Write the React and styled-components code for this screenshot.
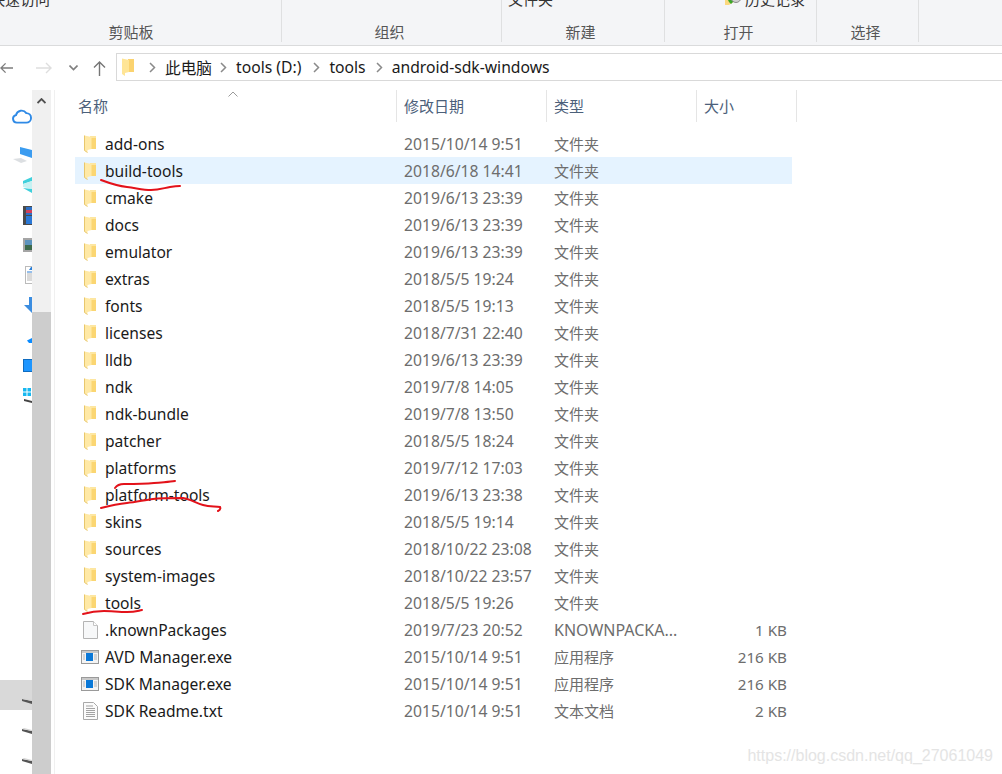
import styled, { createGlobalStyle } from "styled-components";

const GlobalStyle = createGlobalStyle`
  html, body {
    margin: 0;
    padding: 0;
    background: #fff;
  }

  body {
    font-family: "Noto Sans", "Noto Sans CJK SC", sans-serif;
  }
`;

const Page = styled.div`
  position: relative;
  width: 1002px;
  height: 774px;
  overflow: hidden;
  display: flex;
  flex-flow: column;
`;

const Ribbon = styled.div`
  display: flex;
  height: 45px;
  flex-shrink: 0;
  overflow: hidden;
  background: #f4f5f7;
  border-bottom: 1px solid #dadbdc;
`;

const RibbonGroup = styled.div`
  position: relative;
  display: flex;
  flex-flow: column;
  justify-content: flex-end;
  align-items: center;
  width: ${(p) => p.$width}px;
  height: 42px;
  flex-shrink: 0;
  padding-right: ${(p) => p.$pad}px;
  border-right: 1px solid #dfe0e1;
  box-sizing: border-box;
`;

const RibbonLabel = styled.div`
  height: 22px;
  font-size: 15px;
  line-height: 24px;
  color: #565656;
  flex-shrink: 0;
`;

const ClippedText = styled.div`
  display: flex;
  align-items: center;
  align-self: flex-start;
  gap: 3px;
  margin-left: ${(p) => p.$left}px;
  margin-bottom: 11px;
  height: 20px;
  font-size: 15px;
  line-height: 20px;
  color: #333;
  white-space: nowrap;
  flex-shrink: 0;
`;

const AddressRow = styled.div`
  display: flex;
  align-items: center;
  height: 44px;
  flex-shrink: 0;
  background: #fff;
`;

const NavButtons = styled.div`
  display: flex;
  align-items: center;
  width: 116px;
  flex-shrink: 0;
`;

const NavButton = styled.div`
  display: flex;
  justify-content: center;
  width: ${(p) => p.$width}px;
  margin-left: ${(p) => p.$left || 0}px;
`;

const AddressBox = styled.div`
  display: flex;
  align-items: center;
  flex: 1;
  height: 28px;
  margin-bottom: 2px;
  padding-left: 5px;
  box-sizing: border-box;
  border: 1px solid #d9d9d9;
  border-right: none;
  font-size: 15.7px;
  color: #1a1a1a;
`;

const Crumb = styled.span`
  white-space: nowrap;
  margin-right: ${(p) => p.$after || 8}px;
`;

const CrumbArrow = styled.svg`
  width: 7px;
  height: 11px;
  margin-right: 9px;
  flex-shrink: 0;
`;

const Body = styled.div`
  display: flex;
  flex: 1;
  min-height: 0;
`;

const NavPane = styled.div`
  display: flex;
  flex-flow: column;
  width: 32px;
  flex-shrink: 0;
  padding-top: 10px;
  overflow: hidden;
  box-sizing: border-box;
`;

const NavItem = styled.div`
  display: flex;
  align-items: center;
  justify-content: flex-end;
  height: 30px;
  flex-shrink: 0;
  margin-bottom: ${(p) => p.$after || 0}px;
  background: ${(p) => (p.$selected ? "#d9d9d9" : "transparent")};
`;

const DriveShift = styled.div`
  display: flex;
  margin-top: 12px;
`;

const Scrollbar = styled.div`
  display: flex;
  flex-flow: column;
  width: 19px;
  flex-shrink: 0;
  background: #f0f0f0;
`;

const ScrollUp = styled.div`
  display: flex;
  justify-content: center;
  align-items: center;
  height: 21px;
  flex-shrink: 0;
`;

const ScrollThumb = styled.div`
  margin-top: 201px;
  flex: 1;
  background: #cdcdcd;
`;

const FilePane = styled.div`
  flex: 1;
  min-width: 0;
  margin-left: 3px;
  padding-left: 20px;
  border-left: 1px solid #f0f0f0;
`;

const ListHeader = styled.div`
  position: relative;
  display: grid;
  grid-template-columns: 322px 150px 150px 100px;
  width: 722px;
  height: 32px;
  margin-bottom: 8px;
`;

const HeaderCell = styled.div`
  padding-left: ${(p) => p.$pad}px;
  border-right: 1px solid #e5e5e5;
  font-size: 15px;
  line-height: 32px;
  color: #4c607a;
`;

const SortCaret = styled.svg`
  position: absolute;
  left: 153px;
  top: 1px;
  width: 10px;
  height: 6px;
`;

const Row = styled.div`
  display: grid;
  grid-template-columns: 322px 150px 150px 95px;
  align-items: center;
  width: 717px;
  height: 27px;
  background: ${(p) => (p.$selected ? "#e5f3ff" : "transparent")};
`;

const NameCell = styled.div`
  display: flex;
  align-items: center;
  font-size: 15.6px;
  color: #1a1a1a;
  white-space: nowrap;
`;

const IconSlot = styled.div`
  display: flex;
  justify-content: center;
  align-items: center;
  width: 30px;
  height: 27px;
  flex-shrink: 0;
`;

const InfoCell = styled.div`
  padding-left: 7px;
  font-size: ${(p) => p.$size}px;
  color: #6d6d6d;
  white-space: nowrap;
`;

const SizeCell = styled.div`
  padding-right: 5px;
  font-size: 15.2px;
  color: #6d6d6d;
  text-align: right;
`;

const Watermark = styled.div`
  position: absolute;
  right: 9px;
  top: 747px;
  font-family: "Liberation Sans", sans-serif;
  font-size: 16px;
  color: #e4e4e4;
  white-space: nowrap;
`;

const InkLayer = styled.svg`
  position: absolute;
  left: 0;
  top: 0;
  pointer-events: none;
`;

function FolderIcon() {
  return (
    <svg width="13" height="18" viewBox="0 0 13 18">
      <path d="M6 1h6v13H6z" fill="#fbd672" />
      <path d="M6 1h6v2H6z" fill="#fde6a0" />
      <path d="M.5.500L7.500 2v12L3.500 15v2.500L.5 15.500z" fill="#ffe9a6" />
      <path d="M.5.500v15l3 2" fill="none" stroke="#e8c76c" />
    </svg>
  );
}

function FileIcon() {
  return (
    <svg width="15" height="18" viewBox="0 0 15 18">
      <path d="M.5.500h10l4 4v13H.5z" fill="#f7f8f9" stroke="#b4b4b4" />
      <path d="M10.500.500v4h4" fill="#fff" stroke="#c4c4c4" />
    </svg>
  );
}

function ExeIcon() {
  return (
    <svg width="18" height="14" viewBox="0 0 18 14">
      <rect x=".5" y=".5" width="17" height="13" fill="#f4f4f4" stroke="#9a9a9a" />
      <rect x="1" y="1" width="16" height="2" fill="#c9c9c9" />
      <rect x="5" y="3" width="7" height="8" fill="#0a78d7" />
      <path d="M13 5h3M13 7h3M13 9h3M2 5h2M2 7h2M2 9h2" stroke="#b5b5b5" />
    </svg>
  );
}

function TextIcon() {
  return (
    <svg width="15" height="18" viewBox="0 0 15 18">
      <path d="M.5.500h10l4 4v13H.5z" fill="#fbfbfb" stroke="#a9a9a9" />
      <path d="M3 4h7M3 6.500h9M3 8.500h9M3 10.500h9M3 12.500h9M3 14.500h9" stroke="#a3a3a3" />
    </svg>
  );
}

function Chevron() {
  return (
    <CrumbArrow viewBox="0 0 7 11">
      <path d="M1 1l4.500 4.500L1 10" fill="none" stroke="#8a8a8a" strokeWidth="1.500" />
    </CrumbArrow>
  );
}

const rowIcons = {
  folder: <FolderIcon />,
  file: <FileIcon />,
  exe: <ExeIcon />,
  text: <TextIcon />,
};

const files = [
  ["add-ons", "2015/10/14 9:51", "文件夹", ""],
  ["build-tools", "2018/6/18 14:41", "文件夹", "", "folder", true],
  ["cmake", "2019/6/13 23:39", "文件夹", ""],
  ["docs", "2019/6/13 23:39", "文件夹", ""],
  ["emulator", "2019/6/13 23:39", "文件夹", ""],
  ["extras", "2018/5/5 19:24", "文件夹", ""],
  ["fonts", "2018/5/5 19:13", "文件夹", ""],
  ["licenses", "2018/7/31 22:40", "文件夹", ""],
  ["lldb", "2019/6/13 23:39", "文件夹", ""],
  ["ndk", "2019/7/8 14:05", "文件夹", ""],
  ["ndk-bundle", "2019/7/8 13:50", "文件夹", ""],
  ["patcher", "2018/5/5 18:24", "文件夹", ""],
  ["platforms", "2019/7/12 17:03", "文件夹", ""],
  ["platform-tools", "2019/6/13 23:38", "文件夹", ""],
  ["skins", "2018/5/5 19:14", "文件夹", ""],
  ["sources", "2018/10/22 23:08", "文件夹", ""],
  ["system-images", "2018/10/22 23:57", "文件夹", ""],
  ["tools", "2018/5/5 19:26", "文件夹", ""],
  [".knownPackages", "2019/7/23 20:52", "KNOWNPACKA...", "1 KB", "file"],
  ["AVD Manager.exe", "2015/10/14 9:51", "应用程序", "216 KB", "exe"],
  ["SDK Manager.exe", "2015/10/14 9:51", "应用程序", "216 KB", "exe"],
  ["SDK Readme.txt", "2015/10/14 9:51", "文本文档", "2 KB", "text"],
];

const drive = (
  <svg width="10" height="6" viewBox="0 0 10 6">
    <path d="M0 1l10 2v3L0 3z" fill="#555" />
    <path d="M2 0l8 2v1L0 1z" fill="#d5d5d5" />
  </svg>
);

function NavIcons() {
  return (
    <NavPane>
      <NavItem $after={10}>
        <svg width="20" height="17" viewBox="0 0 21 17">
          <path
            d="M5 16a4 4 0 0 1-.8-7.900A6 6 0 0 1 15 6a5 5 0 0 1 0 10z"
            fill="none"
            stroke="#2f8ae6"
            strokeWidth="2"
          />
        </svg>
      </NavItem>
      <NavItem>
        <svg width="19" height="16" viewBox="0 0 19 16">
          <path d="M7 0l12 3v8L7 7z" fill="#3b9cf0" />
          <path d="M0 12l8-1 6 3-6 2z" fill="#dcdfe2" />
        </svg>
      </NavItem>
      <NavItem>
        <svg width="9" height="16" viewBox="0 0 9 16">
          <path d="M0 4l9-4v4L0 7z" fill="#3fd0dc" />
          <path d="M0 7l9-3v8L0 10z" fill="#c6f1f2" />
          <path d="M0 11l9 1v4z" fill="#3fd0dc" />
        </svg>
      </NavItem>
      <NavItem>
        <svg width="9" height="19" viewBox="0 0 9 19">
          <rect width="9" height="19" fill="#4a4a4a" />
          <rect x="3" y="1" width="6" height="8" fill="#2d6fc4" />
          <rect x="3" y="4" width="6" height="3" fill="#d0405a" />
          <rect x="3" y="10" width="6" height="8" fill="#2a78d6" />
        </svg>
      </NavItem>
      <NavItem>
        <svg width="9" height="14" viewBox="0 0 9 14">
          <rect width="9" height="14" fill="#a5a5a5" />
          <rect x="2" y="2" width="7" height="10" fill="#5c93bd" />
          <rect x="2" y="7" width="7" height="5" fill="#3c6a4c" />
        </svg>
      </NavItem>
      <NavItem>
        <svg width="7" height="18" viewBox="0 0 7 18">
          <rect width="7" height="18" fill="#fff" />
          <path d="M1 0h6M1 18h6M0 0v18" stroke="#a5a5a5" strokeWidth="1.500" />
          <path d="M2 6h5" stroke="#2a7fd8" />
          <path d="M2 8h5M2 10h5M2 12h5M2 14h5" stroke="#b4b4b4" />
          <path d="M4 4l2-3h1v3z" fill="#2a7fd8" />
        </svg>
      </NavItem>
      <NavItem>
        <svg width="8" height="16" viewBox="0 0 8 16">
          <path d="M5 0h3v16L0 8h5z" fill="#3b8de0" />
        </svg>
      </NavItem>
      <NavItem>
        <svg width="5" height="5" viewBox="0 0 5 5" style={{ marginTop: 10 }}>
          <path d="M0 2.500L5 0v5H2z" fill="#0a8bff" />
        </svg>
      </NavItem>
      <NavItem>
        <svg width="9" height="13" viewBox="0 0 9 13">
          <rect width="9" height="13" fill="#1e96ff" />
          <path d="M0 12h9v1H0zM0 0h9v1H0zM0 0h1v13H0z" fill="#0f6cc0" />
        </svg>
      </NavItem>
      <NavItem $after={270}>
        <svg width="9" height="15" viewBox="0 0 9 15">
          <path d="M0 0h3.500v3.500H0zM4.500 0H8v3.500H4.500zM0 4.500h3.500V8H0zM4.500 4.500H8V8H4.500z" fill="#18b8f0" />
          <path d="M1 11l8 2v2l-8-2z" fill="#444" />
        </svg>
      </NavItem>
      <NavItem $selected>
        <DriveShift>{drive}</DriveShift>
      </NavItem>
      <NavItem>
        <DriveShift>{drive}</DriveShift>
      </NavItem>
      <NavItem>
        <DriveShift>{drive}</DriveShift>
      </NavItem>
    </NavPane>
  );
}

export default function App() {
  return (
    <Page>
      <GlobalStyle />

      <Ribbon>
        <RibbonGroup $width={282} $pad={19}>
          <ClippedText $left={-10}>快速访问</ClippedText>
          <RibbonLabel>剪贴板</RibbonLabel>
        </RibbonGroup>
        <RibbonGroup $width={220} $pad={4}>
          <ClippedText $left={0} />
          <RibbonLabel>组织</RibbonLabel>
        </RibbonGroup>
        <RibbonGroup $width={163} $pad={5}>
          <ClippedText $left={6}>文件夹</ClippedText>
          <RibbonLabel>新建</RibbonLabel>
        </RibbonGroup>
        <RibbonGroup $width={152} $pad={4}>
          <ClippedText $left={60}>
            <svg width="17" height="12" viewBox="0 0 17 12">
              <path d="M0 0h10v8l-6 4H0z" fill="#fbd97f" />
              <path d="M2 5h5l3 2-4 4-2-2z" fill="#3aa62b" />
              <circle cx="11" cy="4.500" r="5" fill="#cfcfcf" stroke="#8b8b8b" />
            </svg>
            历史记录
          </ClippedText>
          <RibbonLabel>打开</RibbonLabel>
        </RibbonGroup>
        <RibbonGroup $width={102} $pad={4}>
          <ClippedText $left={0} />
          <RibbonLabel>选择</RibbonLabel>
        </RibbonGroup>
      </Ribbon>

      <AddressRow>
        <NavButtons>
          <NavButton $width={13}>
            <svg width="14" height="12" viewBox="0 0 14 12">
              <path d="M14 6H1M6 1L1 6l5 5" fill="none" stroke="#7c7c7c" strokeWidth="1.400" />
            </svg>
          </NavButton>
          <NavButton $width={16} $left={23}>
            <svg width="16" height="12" viewBox="0 0 16 12">
              <path d="M0 6h15M10 1l5 5-5 5" fill="none" stroke="#dedede" strokeWidth="1.400" />
            </svg>
          </NavButton>
          <NavButton $width={9} $left={17}>
            <svg width="9" height="6" viewBox="0 0 9 6">
              <path d="M.5.500l4 4 4-4" fill="none" stroke="#808080" strokeWidth="1.600" />
            </svg>
          </NavButton>
          <NavButton $width={13} $left={15}>
            <svg width="13" height="15" viewBox="0 0 13 15">
              <path d="M6.500 15V1M1 6.500l5.500-5.500L12 6.500" fill="none" stroke="#757575" strokeWidth="1.400" />
            </svg>
          </NavButton>
        </NavButtons>
        <AddressBox>
          <svg width="13" height="18" viewBox="0 0 13 18" style={{ marginRight: 14 }}>
            <path d="M6 1h6v13H6z" fill="#fbd36f" />
            <path d="M0 .5L7 2v12l-4 1v3l-3-2z" fill="#ffe596" />
          </svg>
          <Chevron />
          <Crumb>此电脑</Crumb>
          <Chevron />
          <Crumb $after={12}>tools (D:)</Crumb>
          <Chevron />
          <Crumb $after={10}>tools</Crumb>
          <Chevron />
          <Crumb>android-sdk-windows</Crumb>
        </AddressBox>
      </AddressRow>

      <Body>
        <NavIcons />
        <Scrollbar>
          <ScrollUp>
            <svg width="9" height="6" viewBox="0 0 9 6">
              <path d="M.5 5l4-4 4 4" fill="none" stroke="#505050" strokeWidth="1.800" />
            </svg>
          </ScrollUp>
          <ScrollThumb />
        </Scrollbar>
        <FilePane>
          <ListHeader>
            <HeaderCell $pad={3}>名称</HeaderCell>
            <HeaderCell $pad={7}>修改日期</HeaderCell>
            <HeaderCell $pad={7}>类型</HeaderCell>
            <HeaderCell $pad={7}>大小</HeaderCell>
            <SortCaret viewBox="0 0 10 6">
              <path d="M.5 5.500L5 1l4.500 4.500" fill="none" stroke="#9a9a9a" />
            </SortCaret>
          </ListHeader>

          {files.map(([name, date, type, size, kind = "folder", selected]) => (
            <Row key={name} $selected={selected}>
              <NameCell>
                <IconSlot>{rowIcons[kind]}</IconSlot>
                {name}
              </NameCell>
              <InfoCell $size={15.7}>{date}</InfoCell>
              <InfoCell $size={kind === "file" ? 16 : 15}>{type}</InfoCell>
              <SizeCell>{size}</SizeCell>
            </Row>
          ))}
        </FilePane>
      </Body>

      <Watermark>https://blog.csdn.net/qq_27061049</Watermark>

      <InkLayer width="1002" height="774" viewBox="0 0 1002 774" fill="none" stroke="#e3121a" strokeWidth="2" strokeLinecap="round">
        <path d="M101 180c8 3 17 6 26 7s16 3 24 3 13-2 19-3 7-1 10-1" />
        <path d="M115 488c2-3 5-4 9-4 10 0 20 0 30-1s15-1 21-2" />
        <path d="M101 508c8-2 17-4 26-5s18-3 26-4 20-1 30-1c7 1 13 5 20 7s12 1 17 2c1 2 0 3-2 4" />
        <path d="M83 614c7-2 14-3 21-3s15 1 23 1 10-1 15-2" />
      </InkLayer>
    </Page>
  );
}
